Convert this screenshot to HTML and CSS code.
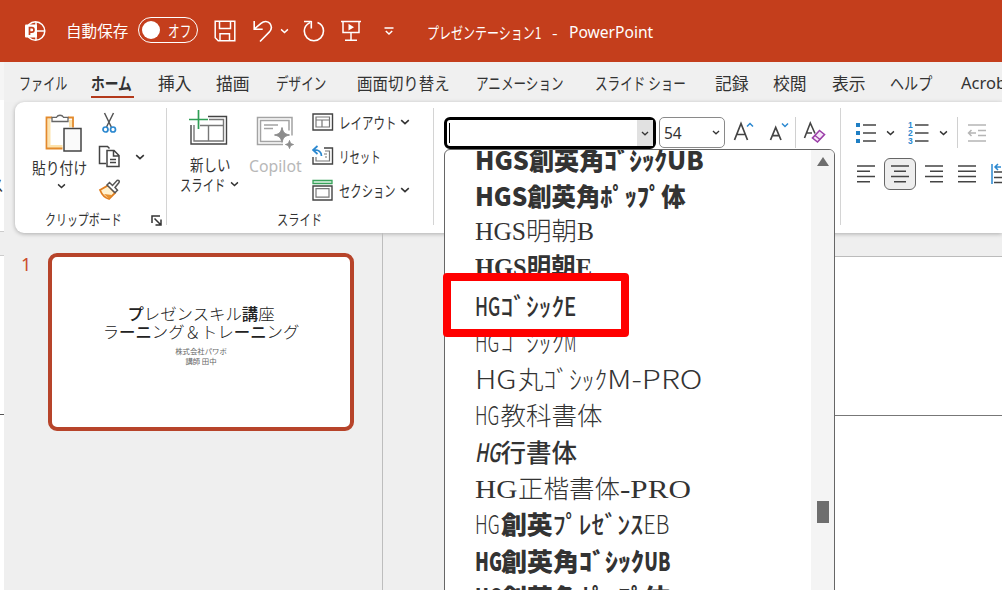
FILE: index.html
```html
<!DOCTYPE html>
<html lang="ja">
<head>
<meta charset="utf-8">
<title>プレゼンテーション1 - PowerPoint</title>
<link rel="stylesheet" href="styles.css">
</head>
<body>
<svg class="defs" width="0" height="0">
  <symbol id="chev" viewBox="0 0 10 6"><path d="M1.2 1.2 5 4.6 8.800 1.200" fill="none" stroke="currentColor" stroke-width="1.6"/></symbol>
</svg>
<div class="app">
  <header class="titlebar">
    <svg class="logo" width="22" height="22" viewBox="0 0 22 22"><circle cx="11.500" cy="11" r="9.300" fill="none" stroke="#fff" stroke-width="1.500"/><path d="M12 2v18M12 11h9" stroke="#fff" stroke-width="1.500"/><rect x="1" y="4.500" width="12" height="13" rx="1" fill="#fff"/><path d="M5.500 15V7.700h2.300a2.100 2.100 0 0 1 0 4.400H5.500" fill="none" stroke="#c43e1c" stroke-width="1.700"/></svg>
    <span class="autosave">自動保存</span>
    <span class="toggle"><i class="knob"></i><span class="kana">オフ</span></span>
    <svg class="save" width="22" height="22" viewBox="0 0 22 22"><path d="M1.200 1.200h19.600v19.600H4.200l-3-3zM5.500 1.500v7h11v-7M6 20.500v-6.700h9.500v6.700" fill="none" stroke="#fff" stroke-width="1.500"/></svg>
    <svg class="undo" width="20" height="23" viewBox="0 0 20 23"><path d="M1.200 1v8.300h8.500M1.400 9 8 3.300c3-2.500 7-2.300 9 .3 2 2.800 1.600 6-.8 8.500L7 21.500" fill="none" stroke="#fff" stroke-width="1.600"/></svg>
    <svg class="chev undo-c" width="9" height="6"><use href="#chev"/></svg>
    <svg class="redo" width="22" height="23" viewBox="0 0 22 23"><path d="M8.300 1v7.500M1 1.500h7.500M14.500 2.600c4 1.500 6 4.700 6 8.500 0 5.300-4.200 9.600-9.600 9.600s-9.600-4.300-9.600-9.600c0-3.700 2.200-6.800 5.600-8.500" fill="none" stroke="#fff" stroke-width="1.600"/></svg>
    <svg class="present" width="20" height="22" viewBox="0 0 20 22"><path d="M0 1.500h20M2 2v10.500h16V2M10 12.500V20M4 20.300h12" fill="none" stroke="#fff" stroke-width="1.500"/><path d="m7.500 3.800 5.500 3.400-5.500 3.400z" fill="#fff"/></svg>
    <svg class="more" width="10" height="9" viewBox="0 0 10 9"><path d="M.5 1h9M1.800 4 5 7l3.200-3" fill="none" stroke="#fff" stroke-width="1.500"/></svg>
    <span class="doc"><span class="kana">プレゼンテーション1</span><span class="dash">-</span><span class="prod">PowerPoint</span></span>
  </header>

  <div class="below">
    <aside class="edge"><i class="e1"></i><i class="e2"><span>ス</span></i><i class="e3"></i><i class="e4"></i></aside>
    <div class="window">
      <nav class="tabs">
        <a><span class="kana tight">ファイル</span></a>
        <a class="active"><span class="kana">ホーム</span></a>
        <a>挿入</a><a>描画</a>
        <a><span class="kana">デザイン</span></a>
        <a><span class="mixed">画面切り替え</span></a>
        <a><span class="kana">アニメーション</span></a>
        <a><span class="kana">スライド ショー</span></a>
        <a>記録</a><a>校閲</a><a>表示</a>
        <a><span class="kana wide">ヘルプ</span></a>
        <a class="latin">Acrobat</a>
      </nav>

      <section class="ribbon">
        <div class="group clipboard">
          <div class="tools">
            <div class="paste">
              <svg width="38" height="42" viewBox="0 0 38 42"><path d="M4 7v27.500h13.500M25.500 8v7" fill="none" stroke="#fde3ac" stroke-width="3"/><path d="M7 5.500H1.500v31h16M23 5.500h5v10" fill="none" stroke="#e38a2b" stroke-width="1.800"/><path d="M7 9.500V5.300h4.500a4 4 0 0 1 7 0H23v4.200z" fill="#fff" stroke="#666" stroke-width="1.300"/><path d="M19 16.500h17v22.500H19z" fill="#fafafa" stroke="#444" stroke-width="1.500"/></svg>
              <span class="mixed">貼り付け</span>
              <svg class="chev" width="9" height="6"><use href="#chev"/></svg>
            </div>
            <div class="minis">
              <svg width="22" height="22" viewBox="0 0 22 22"><path d="m6.500 1 6.800 14M15.500 1 8.500 15" stroke="#555" stroke-width="1.500" fill="none"/><circle cx="7.500" cy="17.500" r="2.500" fill="none" stroke="#2b88d0" stroke-width="1.700"/><circle cx="15" cy="17.500" r="2.500" fill="none" stroke="#2b88d0" stroke-width="1.700"/></svg>
              <svg width="23" height="23" viewBox="0 0 23 23"><path d="M8 18.500H1.500V1.500h8l2 2M9 5.500h7l5 5v11H9zM15.500 5.500v5.500H21M12 14.500h6M12 17.500h6" fill="none" stroke="#444" stroke-width="1.500"/></svg>
              <svg width="23" height="22" viewBox="0 0 23 22"><path d="m2 11 8-4.500 7 7.500-6 6C7 19 4 16 2 11z" fill="#fff1cf" stroke="#e07e20" stroke-width="1.800"/><path d="m6 15 8 1-3 4z" fill="#e8912f"/><path d="m9 6 2.500-2.500 3 3L19 1.500c1.500-.8 2.800.5 2 2L17 8.500l2.500 2.800-2.500 2.500z" fill="#fff" stroke="#555" stroke-width="1.500"/></svg>
            </div>
            <svg class="chev copy-c" width="10" height="6"><use href="#chev"/></svg>
          </div>
          <div class="label"><span class="kana">クリップボード</span>
            <svg width="11" height="11" viewBox="0 0 11 11"><path d="M1 8V1h8M3.500 3.500l6 6M10 4.500V10H4.500" fill="none" stroke="#333" stroke-width="1.500"/></svg>
          </div>
        </div>

        <div class="group slides">
          <div class="tools">
            <div class="newslide">
              <svg width="40" height="38" viewBox="0 0 40 38"><path d="M20 7.500h18.500V35H3V16" fill="none" stroke="#444" stroke-width="1.400"/><path d="M21 10.500h14.500V32H6V16M12 16.500h23.500M20.500 16.500V32" fill="none" stroke="#777" stroke-width="1.400"/><path d="M10.500 1v19M1 10.500h19" stroke="#2f9e55" stroke-width="1.700"/></svg>
              <span class="shin">新しい</span>
              <span class="pair"><span class="kana">スライド</span><svg class="chev" width="9" height="6"><use href="#chev"/></svg></span>
            </div>
            <div class="copilot">
              <svg width="38" height="34" viewBox="0 0 38 34"><path d="M27 28.500H1.500v-27H36v18M25 25.500H4.500v-21H33v10M8 9h14M8 12.500h9" fill="none" stroke="#a3a3a3" stroke-width="1.500"/><path d="M26 11.500c1.200 5 2.500 6.300 7.500 7.500-5 1.200-6.300 2.500-7.500 7.500-1.200-5-2.500-6.300-7.500-7.500 5-1.200 6.300-2.500 7.500-7.500zM33.500 24.500c.7 2.800 1.300 3.400 4 4-2.700.7-3.300 1.300-4 4-.7-2.700-1.300-3.300-4-4 2.700-.6 3.300-1.200 4-4z" fill="#8c8c8c" stroke="#8c8c8c"/></svg>
              <span>Copilot</span>
            </div>
            <div class="rows">
              <div><svg width="22" height="22" viewBox="0 0 22 22"><path d="M1 3h19.500v16H1z" fill="none" stroke="#444" stroke-width="1.400"/><path d="M4 6h13.500v10H4zM4 9h13.500M10 9v7" fill="none" stroke="#777" stroke-width="1.200"/></svg><span class="kana lay">レイアウト</span><svg class="chev" width="10" height="6"><use href="#chev"/></svg></div>
              <div><svg width="22" height="22" viewBox="0 0 22 22"><path d="M12 3h8.500v16H1v-7" fill="none" stroke="#444" stroke-width="1.400"/><path d="M13 6h4.500v10H4v-4M12 9h3M13 12h2" fill="none" stroke="#777" stroke-width="1.200"/><path d="M5.500 1 1 5l4.500 4M1.500 5c5.500-.5 8 2 8 6" fill="none" stroke="#2b88d0" stroke-width="1.700"/></svg><span class="kana reset">リセット</span></div>
              <div><svg width="22" height="22" viewBox="0 0 22 22"><path d="M1 1.500h19v3H1z" fill="#e5f5e8" stroke="#39a35b" stroke-width="1.300"/><path d="M1 7h19v14H1z" fill="none" stroke="#444" stroke-width="1.400"/><path d="M4 9.700h13v8.500H4z" fill="none" stroke="#777" stroke-width="1.200"/></svg><span class="kana sec">セクション</span><svg class="chev" width="10" height="6"><use href="#chev"/></svg></div>
            </div>
          </div>
          <div class="label"><span class="kana">スライド</span></div>
        </div>

        <div class="group font">
          <div class="combo"><i class="caret"></i><span class="drop"><svg class="chev" width="8" height="5"><use href="#chev"/></svg></span></div>
          <div class="size">54<svg class="chev" width="8" height="5"><use href="#chev"/></svg></div>
          <svg class="grow" width="22" height="22" viewBox="0 0 22 22"><path d="M1.500 20 8 3.500 14.500 20M3.800 14.500h8.500" fill="none" stroke="#444" stroke-width="1.700"/><path d="m14 6.500 3-3 3 3" fill="none" stroke="#2b88d0" stroke-width="1.500"/></svg>
          <svg class="shrink" width="22" height="22" viewBox="0 0 22 22"><path d="M1.500 20 6.700 7.500 12 20M3.300 15.700H10" fill="none" stroke="#444" stroke-width="1.700"/><path d="m13 3.500 3 3 3-3" fill="none" stroke="#2b88d0" stroke-width="1.500"/></svg>
          <i class="sep"></i>
          <svg class="clear" width="24" height="24" viewBox="0 0 24 24"><path d="M1.500 18 7.300 3 12 13.500M3.500 13H9" fill="none" stroke="#444" stroke-width="1.600"/><path d="m16.500 10.500 5 4-7 7.500-5-4z" fill="#f6e6f8" stroke="#9b3fa8" stroke-width="1.600"/><path d="m12 15.500 5 4" stroke="#9b3fa8" stroke-width="1.500"/></svg>
        </div>

        <div class="group para">
          <div class="line">
            <svg width="20" height="22" viewBox="0 0 20 22"><path d="M7 3h13M7 11h13M7 19h13" stroke="#444" stroke-width="1.500"/><path d="M0 1h4v4H0zM0 9h4v4H0zM0 17h4v4H0z" fill="#1f7fc4"/></svg>
            <svg class="chev" width="9" height="6"><use href="#chev"/></svg>
            <svg class="num" width="21" height="24" viewBox="0 0 21 24"><path d="M7 4h13.500M7 12h13.500M7 20h13.500" stroke="#444" stroke-width="1.500"/><g class="digits"><text x="0" y="7">1</text><text x="0" y="15">2</text><text x="0" y="23">3</text></g></svg>
            <svg class="chev" width="9" height="6"><use href="#chev"/></svg>
            <i class="sep"></i>
            <svg width="20" height="22" viewBox="0 0 20 22"><path d="M1 3h18M11 8.500h8M11 13.500h8M1 19h18M9 11H1.500M4.500 8l-3 3 3 3" fill="none" stroke="#b5b5b5" stroke-width="1.500"/></svg>
          </div>
          <div class="line aligns">
            <svg width="18" height="18" viewBox="0 0 18 18"><path d="M0 1h18M0 6.300h13M0 11.600h18M0 16.800h13" stroke="#444" stroke-width="1.500"/></svg>
            <span class="on"><svg width="18" height="18" viewBox="0 0 18 18"><path d="M0 1h18M3 6.300h12M0 11.600h18M3 16.800h12" stroke="#444" stroke-width="1.500"/></svg></span>
            <svg width="18" height="18" viewBox="0 0 18 18"><path d="M0 1h18M5 6.300h13M0 11.600h18M5 16.800h13" stroke="#444" stroke-width="1.500"/></svg>
            <svg width="18" height="18" viewBox="0 0 18 18"><path d="M0 1h18M0 6.300h18M0 11.600h18M0 16.800h18" stroke="#444" stroke-width="1.500"/></svg>
            <svg width="20" height="22" viewBox="0 0 20 22"><path d="M1 1v20M10 4H4M7 1 4 4l3 3" fill="none" stroke="#2b88d0" stroke-width="1.500"/><path d="M3 9h15M3 14.500h15M3 19.500h15" stroke="#444" stroke-width="1.500"/></svg>
          </div>
        </div>
      </section>

      <main class="work">
        <div class="panel">
          <span class="index">1</span>
          <div class="thumb">
            <h1><b>プ</b>レゼンスキル<b>講</b>座<br>ラ<b>ーニ</b>ング＆トレ<b>ーニ</b>ング</h1>
            <p>株式会社パワポ<br>講師 田中</p>
          </div>
        </div>
        <div class="canvas"><div class="slide"></div></div>
      </main>
    </div>
  </div>

  <div class="fontlist">
    <ul>
      <li class="heavy f1">HGS創英角ｺﾞｼｯｸUB</li>
      <li class="heavy f2">HGS創英角ﾎﾟｯﾌﾟ体</li>
      <li class="serif f3">HGS明朝B</li>
      <li class="serif semi f4">HGS明朝E</li>
      <li class="mid"><span class="half two">HG</span>ｺﾞｼｯｸ<span class="half e">E</span></li>
      <li class="thin"><span class="half two">HG</span>ｺﾞｼｯｸ<span class="half m">M</span></li>
      <li class="thin"><span class="wide-hg">HG</span>丸ｺﾞｼｯｸ<span class="wide-mpro">M-PRO</span></li>
      <li class="thin"><span class="half two">HG</span>教科書体</li>
      <li class="brush"><span class="half two">HG</span>行書体</li>
      <li class="thin"><span class="serif-hg">HG</span>正楷書体<span class="serif-pro">-PRO</span></li>
      <li class="thin f11"><span class="half two">HG</span><b>創英</b><em>ﾌﾟﾚｾﾞﾝｽ</em><span class="half eb">EB</span></li>
      <li class="heavy f12"><span class="half two">HG</span>創英角ｺﾞｼｯｸ<span class="half two">UB</span></li>
      <li class="heavy f12"><span class="half two">HG</span>創英角ﾎﾟｯﾌﾟ体</li>
    </ul>
    <div class="scroll"><i class="up"></i><i class="grip"></i></div>
  </div>
  <div class="highlight"></div>
</div>
</body>
</html>
```
FILE: styles.css
```css
* { box-sizing: border-box; }
body { margin: 0; font-family: "Noto Sans CJK JP", sans-serif; color: #333; }
.defs { position: absolute; }
svg { display: block; flex: none; }
i { font-style: normal; }
.app { position: relative; width: 1002px; height: 590px; overflow: hidden; background: #efefef; }
.kana { display: inline-block; transform: scaleX(.75); transform-origin: 0 50%; white-space: nowrap; }
.mixed { display: inline-block; transform: scaleX(.92); transform-origin: 0 50%; white-space: nowrap; }
.chev { color: #333; }

.titlebar { height: 62px; background: #c43e1c; color: #fff; display: flex; align-items: center; padding-left: 24px; font-size: 16px; line-height: 24px; white-space: nowrap; }
.logo { margin-right: 20px; }
.autosave { width: 72px; font-size: 15.6px; margin-top: -2px; }
.toggle { width: 60px; height: 26px; border: 1.5px solid #fff; border-radius: 13px; display: flex; align-items: center; padding-left: 3px; margin: -2px 16px 0 0; }
.knob { flex: none; width: 18px; height: 18px; border-radius: 50%; background: #fff; margin-right: 8px; }
.toggle .kana { font-size: 15.500px; }
.undo { margin-left: 17px; }
.undo-c { color: #fff; margin-left: 7px; }
.redo { margin-left: 14px; }
.present { margin-left: 16px; }
.more { margin-left: 23px; }
.doc { display: flex; margin-left: 33px; padding-top: 1px; }
.doc .kana { width: 125px; }
.dash { width: 17px; }
.prod { font-family: "Noto Sans", sans-serif; font-size: 16px; display: inline-block; transform: scaleX(.975); transform-origin: 0 50%; }

.below { display: grid; grid-template-columns: 4px 998px; height: 528px; }
.edge { display: flex; flex-direction: column; overflow: hidden; background: #fff; }
.e1 { height: 38px; background: #f5f5f5; }
.e2 { height: 132px; padding-top: 72px; font-size: 16px; direction: rtl; border-bottom: 1px solid #ccc; }
.e3 { height: 24px; background: #efefef; border-bottom: 1px solid #ccc; }
.e4 { height: 159px; border-bottom: 1px solid #555; }
.window { display: flex; flex-direction: column; min-width: 0; }

.tabs { height: 40px; background: #f0f0f0; display: grid; grid-template-columns: 72px 67px 58px 60px 81px 119px 119px 120px 58px 59px 58px 71px 60px; padding: 8px 0 0 15px; font-size: 16.800px; line-height: 26px; white-space: nowrap; overflow: hidden; }
.tabs .tight { transform: scaleX(.72); }
.tabs .wide { transform: scaleX(.84); }
.active { font-weight: 700; position: relative; }
.active .kana { transform: scaleX(.82); }
.active::after { content: ""; position: absolute; left: 0; top: 26px; width: 43px; height: 2px; background: #b3391b; }
.latin { font-family: "Noto Sans", sans-serif; font-size: 16.500px; }

.ribbon { height: 131px; margin-left: 11px; background: #fff; border-radius: 9px 0 0 9px; box-shadow: 0 1px 4px rgba(0,0,0,.28); display: grid; grid-template-columns: 152px 267px 407px 161px; padding: 6px 0 8px; font-size: 15.500px; line-height: 20px; }
.group { border-right: 1px solid #d4d4d4; height: 117px; min-width: 0; }
.para { border: 0; overflow: hidden; }
.tools { display: flex; height: 101px; white-space: nowrap; }
.label { line-height: 20px; display: flex; font-size: 15px; }

.paste { width: 67px; padding: 4px 0 0 17px; }
.paste svg:first-child { margin-left: 13px; }
.paste .mixed { margin-top: 3px; transform: scaleX(.89); }
.paste .chev { margin: 6px 0 0 25px; }
.minis { width: 37px; padding: 4px 0 0 16px; display: flex; flex-direction: column; gap: 11px; }
.copy-c { margin: 46px 0 0 16px; }
.clipboard .label { padding-left: 30px; }
.clipboard .label .kana { width: 106px; transform: scaleX(.73); }
.clipboard .label svg { margin-top: 6px; }

.newslide { width: 80px; padding: 1px 0 0 13px; }
.newslide > svg { margin-left: 8px; }
.shin { display: block; margin: 7px 0 0 10px; transform: scaleX(.87); transform-origin: 0 50%; }
.pair { display: flex; align-items: center; }
.pair .kana { width: 50px; transform: scaleX(.73); }
.copilot { width: 65px; padding: 8px 0 0 2px; color: #b8b8b8; font-family: "Noto Sans", sans-serif; font-size: 15.500px; }
.copilot svg { margin: 0 0 5px 7px; }
.copilot span { display: block; padding-top: 1px; transform: scaleX(1.02); transform-origin: 0 50%; }
.rows { display: flex; flex-direction: column; gap: 12px; padding-top: 3px; }
.rows div { display: flex; align-items: center; height: 22px; }
.rows .kana { margin-left: 5px; width: 61px; }
.rows .lay { transform: scaleX(.74); }
.rows .reset { transform: scaleX(.67); }
.rows .sec { transform: scaleX(.73); }
.slides .label { padding-left: 110px; }

.font { display: flex; padding: 9px 0 0 10px; }
.combo { width: 212px; height: 32px; border: 3px solid #000; border-radius: 6px; display: flex; justify-content: space-between; background: #fff; }
.caret { width: 1px; height: 20px; margin: 3px 0 0 2px; background: #000; }
.drop { width: 16px; background: #e1e1e1; display: grid; place-items: center; }
.size { width: 66px; height: 31px; margin-left: 3px; border: 1px solid #8a8a8a; border-radius: 5px; display: flex; align-items: center; justify-content: space-between; padding: 0 4px; font: 15.500px "Noto Sans", sans-serif; }
.grow { margin: 3px 0 0 8px; }
.shrink { margin: 3px 0 0 14px; }
.sep { width: 1px; height: 31px; background: #d0d0d0; }
.font .sep { margin-left: 4px; }
.clear { margin: 3px 0 0 7px; }

.para { padding: 9px 0 0 15px; }
.line { display: flex; align-items: center; height: 31px; }
.line .chev { margin-left: 10px; }
.line .num { margin-left: 13px; }
.digits { font: 700 8.500px "Liberation Sans", sans-serif; fill: #2b88d0; }
.line .sep { margin: 0 9px; }
.aligns { margin: 10px 0 0 1px; height: 32px; }
.on { flex: none; width: 32px; height: 32px; margin: 0 8px 0 9px; border: 1.500px solid #666; border-radius: 6px; background: #eee; display: grid; place-items: center; }
.aligns > svg + svg { margin-left: 15px; }
.on + svg { margin-left: 1px; }

.work { flex: 1; display: grid; grid-template-columns: 379px 619px; }
.panel { border-right: 1px solid #bdbdbd; padding: 20px 0 0 17px; display: flex; align-items: flex-start; }
.index { width: 27px; font: 18px/22px "Noto Sans", sans-serif; color: #cb4b2c; }
.thumb { width: 306px; height: 178px; border: 4px solid #b7442a; border-radius: 9px; background: #fff; text-align: center; color: #222; padding-top: 47px; }
.thumb h1 { margin: 0; font-size: 16.400px; line-height: 18px; font-weight: 300; }
.thumb h1 b { font-weight: 500; }
.thumb p { margin: 6px 0 0; font-size: 7.400px; line-height: 10px; color: #666; }
.canvas { padding: 23px 0 0 300px; }
.slide { height: 400px; background: linear-gradient(#777, #777) 0 158px / 100% 1px no-repeat #fff; border-top: 1px solid #bbb; }

.fontlist { position: absolute; z-index: 2; left: 444px; top: 149px; width: 391px; height: 460px; background: #fff; border: 1.500px solid #666; border-radius: 6px 6px 0 0; overflow: hidden; display: flex; justify-content: space-between; }
.fontlist ul { list-style: none; margin: -9px 0 0; padding: 0 0 0 30px; white-space: nowrap; }
.fontlist li { height: 36.450px; line-height: 36.450px; font-size: 25.500px; transform-origin: 0 50%; width: max-content; }
.heavy { font-weight: 900; }
.serif { font-family: "Liberation Serif", "Noto Sans CJK JP", serif; font-weight: 300; }
.semi { font-weight: 600; }
.mid { font-weight: 500; }
.thin { font-weight: 300; }
.brush { font-weight: 500; }
.brush .half { font-style: italic; }
.thin b { font-weight: 800; }
.thin em { font-style: normal; font-weight: 500; }
.fontlist .f1 { transform: scaleX(.985); }
.fontlist .f2 { transform: scaleX(.955); }
.fontlist .f4 { transform: scaleX(.96); }
.fontlist .f11 { transform: scaleX(1.015); }
.fontlist .f12 { transform: scaleX(1.02); }
.half, .wide-hg, .wide-mpro, .serif-hg, .serif-pro { display: inline-block; transform-origin: 0 50%; }
.half.two { width: 25.500px; transform: scaleX(.69); }
.half.e { width: 12.750px; transform: scaleX(.8); }
.half.m { width: 12.750px; transform: scaleX(.62); }
.half.eb { width: 25.500px; transform: scaleX(.82); }
.wide-hg { width: 43px; transform: scaleX(1.18); }
.wide-mpro { width: 98px; transform: scaleX(1.22); }
.serif-hg { width: 43px; font-family: "Liberation Serif", serif; transform: scaleX(1.15); }
.serif-pro { width: 71px; font-family: "Liberation Serif", serif; transform: scaleX(1.22); }
.scroll { width: 23px; background: #f4f4f4; display: flex; flex-direction: column; align-items: center; padding-top: 7px; }
.up { border: 6px solid transparent; border-top: 0; border-bottom: 9px solid #6e6e6e; }
.grip { width: 12px; height: 22px; margin-top: 335px; background: #6e6e6e; }
.highlight { position: absolute; z-index: 3; left: 443px; top: 273px; width: 186px; height: 64px; border: 8px solid #f00; border-radius: 4px; }
```
